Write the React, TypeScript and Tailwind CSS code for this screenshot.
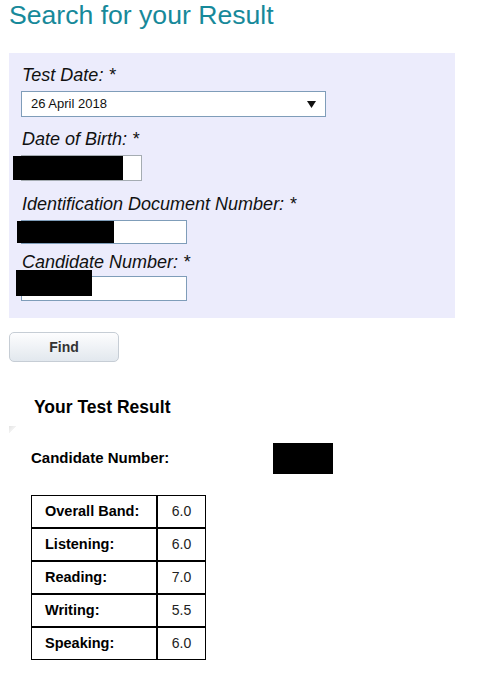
import React from 'react';

type Score = { label: string; value: string };

const scores: Score[] = [
  { label: 'Overall Band:', value: '6.0' },
  { label: 'Listening:', value: '6.0' },
  { label: 'Reading:', value: '7.0' },
  { label: 'Writing:', value: '5.5' },
  { label: 'Speaking:', value: '6.0' },
];

function Label({ children, className = '' }: { children: React.ReactNode; className?: string }) {
  return (
    <p className={`text-[18px] leading-[20px] italic text-[#111] pl-[1px] ${className}`}>
      {children}
    </p>
  );
}

function Redacted({ className }: { className: string }) {
  return <div className={`absolute bg-black ${className}`} />;
}

export default function App() {
  return (
    <div className="min-h-[679px] w-[478px] bg-white font-['Liberation_Sans',Arial,sans-serif] text-black">
      <h1 className="pl-[9px] text-[26.6px] leading-[30px] font-normal text-[#17899a]">
        Search for your Result
      </h1>

      <div className="mx-[9px] mt-[23px] w-[446px] bg-[#ececfc] pl-[12px] pt-[12px] pb-[17px]">
        <Label>Test Date: *</Label>
        <div className="mt-[6px] flex h-[26px] w-[305px] items-center justify-between border border-[#7f9db9] bg-white pl-[9px] pr-[9px]">
          <span className="text-[13px] text-[#111]">26 April 2018</span>
          <svg width="9" height="7" viewBox="0 0 9 7" className="mt-[1px]">
            <path d="M0 0 H9 L4.5 7 Z" fill="#111" />
          </svg>
        </div>

        <Label className="mt-[12px]">Date of Birth: *</Label>
        <div className="relative mt-[6px] h-[26px] w-[121px] border border-[#a5acb2] bg-white">
          <Redacted className="left-[-9px] top-0 h-[24px] w-[110px]" />
        </div>

        <Label className="mt-[13px]">Identification Document Number: *</Label>
        <div className="relative mt-[6px] h-[24px] w-[166px] border border-[#7f9db9] bg-white">
          <Redacted className="left-[-5px] top-0 h-[22px] w-[97px]" />
        </div>

        <Label className="mt-[8px]">Candidate Number: *</Label>
        <div className="relative mt-[4px] h-[25px] w-[166px] border border-[#7f9db9] bg-white">
          <Redacted className="left-[-6px] top-[-7px] h-[26px] w-[76px]" />
        </div>
      </div>

      <button className="ml-[9px] mt-[14px] flex h-[30px] w-[110px] items-center justify-center rounded-[5px] border border-[#c6cdd5] bg-gradient-to-b from-[#fdfdfe] to-[#e2e8ee] text-[14px] font-bold text-[#333]">
        Find
      </button>

      <h2 className="mt-[34px] pl-[34px] text-[17.5px] leading-[22px] font-bold text-black">
        Your Test Result
      </h2>

      <div className="ml-[9px] mt-[8px] h-[8px] w-[8px] bg-gradient-to-br from-[#e4e4e4] via-[#f4f4f4] to-white to-50%" />

      <div className="mt-[9px] flex items-center pl-[31px]">
        <span className="w-[242px] text-[15px] font-bold">Candidate Number:</span>
        <div className="h-[31px] w-[60px] bg-black" />
      </div>

      <table className="ml-[31px] mt-[21px] border-separate border-spacing-0 text-[14px]">
        <tbody>
          {scores.map((s) => (
            <tr key={s.label} className="h-[33px]">
              <td className="w-[126px] border border-black pl-[13px] text-[14.5px] font-bold">{s.label}</td>
              <td className="w-[49px] border border-black text-center text-[#222]">{s.value}</td>
            </tr>
          ))}
        </tbody>
      </table>
    </div>
  );
}
